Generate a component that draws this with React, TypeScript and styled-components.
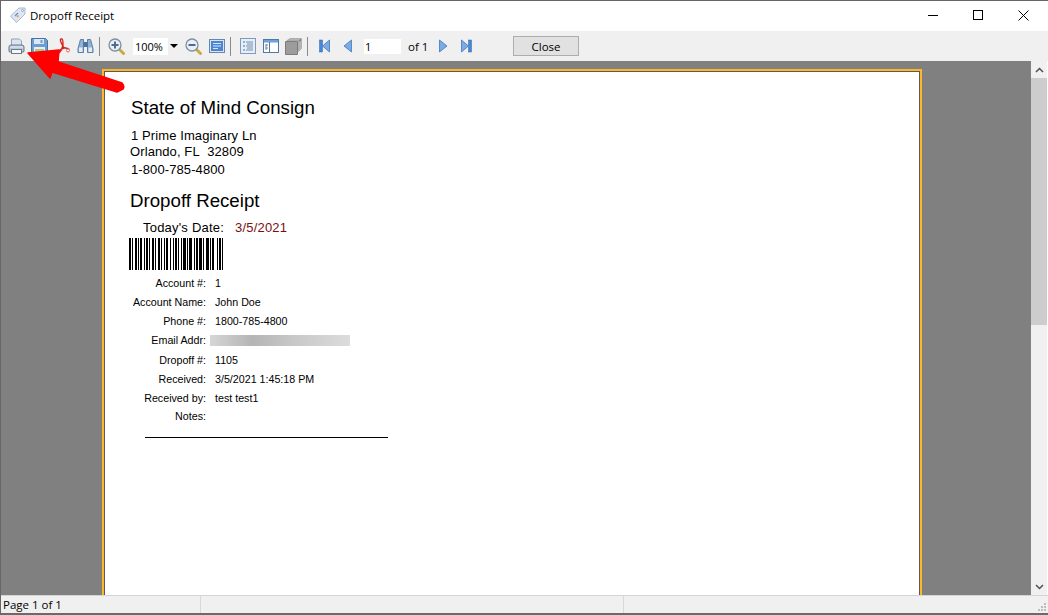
import React from "react"
import styled, { createGlobalStyle } from "styled-components"

const GlobalStyle = createGlobalStyle`
	html, body {
		margin: 0;
		padding: 0;
		height: 100%;
		overflow: hidden;
		background: #fff;
	}
	#root {
		height: 100%;
	}
`

const details = [
	{ label: "Account #:", value: "1" },
	{ label: "Account Name:", value: "John Doe" },
	{ label: "Phone #:", value: "1800-785-4800" },
	{ label: "Email Addr:", blurred: true },
	{ label: "Dropoff #:", value: "1105" },
	{ label: "Received:", value: "3/5/2021 1:45:18 PM" },
	{ label: "Received by:", value: "test test1" },
	{ label: "Notes:", value: "" },
]

// widths of bar, gap, bar, gap... read off the reference
const barWidths = [
	2, 1, 1, 2, 2, 1, 1, 1, 2, 2, 1, 1, 2, 1, 1, 2, 2, 1, 1, 2, 2, 1, 1, 2, 1, 1, 2, 2, 1, 2, 1, 1, 2, 1, 1, 2, 1, 1, 3,
	1, 1, 1, 3, 2, 1, 1, 2, 1, 3, 1, 1, 2, 3, 1, 1, 1, 2, 3, 1, 1, 2, 1, 1,
]

function Barcode() {
	let x = 0
	const bars = barWidths.map((w, i) => {
		const bar = i % 2 === 0 ? <rect key={i} x={x} y={0} width={w} height={32} fill="#000" /> : null
		x += w
		return bar
	})
	return (
		<BarcodeSvg width={94} height={32} viewBox="0 0 94 32">
			{bars}
		</BarcodeSvg>
	)
}

const PrintIcon = () => (
	<svg width={17} height={17} viewBox="0 0 17 17">
		<path d="M3.500 1h8l2 2v5h-10z" fill="#dbe5f0" stroke="#8ea6bf" />
		<path d="M1 9Q1 7 3 7h11q2 0 2 2v4q0 1-1 1H2q-1 0-1-1z" fill="#bcc9d6" stroke="#64778b" />
		<path d="M2 9h13" stroke="#e6edf4" />
		<rect x={3.500} y={11.500} width={10} height={4} fill="#f4f6f8" stroke="#6d7c8c" />
	</svg>
)

const SaveIcon = () => (
	<svg width={17} height={17} viewBox="0 0 17 17">
		<path d="M.5.5h14l2 2v14H.5z" fill="#6f9dd0" stroke="#4572a8" />
		<rect x={3} y={1} width={10} height={5} fill="#dbe7f4" />
		<rect x={9.500} y={2} width={2} height={3} fill="#6f9dd0" />
		<rect x={3} y={9} width={11} height={7} fill="#e4eef6" />
		<rect x={4} y={11} width={9} height={4} fill="#a4cc86" />
	</svg>
)

const PdfIcon = () => (
	<svg width={16} height={17} viewBox="0 0 16 17">
		<path
			d="M6 1c-1 0-.5 2.500.5 4.500L9 10c-2 .5-4 1.500-5.500 3.500-1 1.500 0 2 1 1 1.500-1.500 3-5 3.500-7.500 0-2.500 0-6-1-6zM8 9.500c2 .2 4.500.5 6.500 2"
			fill="none"
			stroke="#d4231f"
			strokeWidth={1.400}
		/>
		<circle cx={13} cy={12.500} r={1.500} fill="#fff" stroke="#d86a66" />
	</svg>
)

const BinocularIcon = () => (
	<svg width={17} height={17} viewBox="0 0 17 17">
		<path d="M3.500 1.500h3v13h-5.500v-4z" fill="#8fb3d6" stroke="#5a7fa6" />
		<path d="M13.500 1.500h-3v13h5.500v-4z" fill="#8fb3d6" stroke="#5a7fa6" />
		<rect x={6.500} y={4} width={4} height={5} fill="#4f7397" />
		<rect x={2} y={9.500} width={3.500} height={4.500} fill="#e2ecf5" />
		<rect x={11.500} y={9.500} width={3.500} height={4.500} fill="#e2ecf5" />
	</svg>
)

const ZoomIcon = ({ plus }: { plus?: boolean }) => (
	<svg width={17} height={17} viewBox="0 0 17 17">
		<path d="M11 11l4.500 4.500" stroke="#c9aa45" strokeWidth={3} strokeLinecap="round" />
		<circle cx={7} cy={7} r={6} fill="#e8eff6" stroke="#7f8f9f" strokeWidth={1.300} />
		<rect x={3.500} y={6} width={7} height={2} fill="#4d6d90" />
		{plus && <rect x={6} y={3.500} width={2} height={7} fill="#4d6d90" />}
	</svg>
)

const PageViewIcon = () => (
	<svg width={16} height={16} viewBox="0 0 16 16">
		<rect x={0.500} y={1.500} width={15} height={13} fill="#d8e4f2" stroke="#6a86a8" />
		<rect x={2} y={3} width={12} height={10} fill="#4a86d4" />
		<path d="M4 5.500h8M4 8h8M4 10.500h5" stroke="#d5e6f8" />
	</svg>
)

const ContentsIcon = () => (
	<svg width={16} height={16} viewBox="0 0 16 16">
		<rect x={0.500} y={0.500} width={15} height={15} fill="#e6eef7" stroke="#7f9cc0" />
		<path d="M3 4h2M3 8h2M3 12h2" stroke="#4f7099" />
		<path d="M6 4h7M7 6h6M6 8h7M7 10h6M6 12h7" stroke="#7590b2" />
	</svg>
)

const TreeIcon = () => (
	<svg width={16} height={16} viewBox="0 0 16 16">
		<rect x={0.500} y={1.500} width={15} height={13} fill="#fff" stroke="#4d7aa8" />
		<rect x={1} y={2} width={14} height={2.500} fill="#6ea2d8" />
		<path d="M6.500 4v10" stroke="#4d7aa8" />
		<path d="M3 6v6M3 7h2M3 10h2" stroke="#6f7f90" />
	</svg>
)

const PageSetupIcon = () => (
	<svg width={17} height={17} viewBox="0 0 17 17">
		<path d="M.5 3.500h12v13H.5z" fill="#9c9c9c" stroke="#7c7c7c" />
		<path d="M2 2.500L5 .5h11.500v10l-3 3V3H2z" fill="#b5b5b5" stroke="#8a8a8a" strokeWidth={0.500} />
		<path d="M13 3l3-2.500v3z" fill="#8a8a8a" />
	</svg>
)

const NavIcon = ({ flip, stop }: { flip?: boolean; stop?: boolean }) => (
	<NavSvg $flip={flip} width={11} height={14} viewBox="0 0 11 14">
		{stop && <rect x={0.500} y={1} width={3} height={12} fill="#4a86d4" stroke="#2f66b0" strokeWidth={0.500} />}
		<path d={stop ? "M10.500 1v12L3.500 7z" : "M9.500 1v12L2 7z"} fill="#7cabe2" stroke="#3f77c0" strokeWidth={0.800} />
	</NavSvg>
)

export default function App() {
	return (
		<Window>
			<GlobalStyle />
			<TitleBar>
				<svg width={18} height={18} viewBox="0 0 18 18">
					<path d="M1.500 10L10 2h6v6l-8.500 8.500z" fill="#dde6f2" stroke="#a9bad1" />
					<circle cx={13.500} cy={4.500} r={1} fill="#fff" stroke="#8fa2bd" />
					<path d="M6 10l3-3" stroke="#6f8fc9" strokeWidth={1.500} />
					<path d="M8 11l1.500-1.500" stroke="#d99a3c" strokeWidth={1.500} />
				</svg>
				<Title>Dropoff Receipt</Title>
				<WindowButton aria-label="Minimize">
					<svg width={10} height={10} viewBox="0 0 10 10">
						<path d="M0 5.500h10" stroke="#000" />
					</svg>
				</WindowButton>
				<WindowButton aria-label="Maximize">
					<svg width={10} height={10} viewBox="0 0 10 10">
						<rect x={0.500} y={0.500} width={9} height={9} fill="none" stroke="#000" />
					</svg>
				</WindowButton>
				<WindowButton aria-label="Close window">
					<svg width={11} height={11} viewBox="0 0 11 11">
						<path d="M.5.5l10 10M10.500.5l-10 10" stroke="#000" />
					</svg>
				</WindowButton>
			</TitleBar>

			<Toolbar>
				<ToolIcon><PrintIcon /></ToolIcon>
				<ToolIcon><SaveIcon /></ToolIcon>
				<ToolIcon><PdfIcon /></ToolIcon>
				<ToolIcon><BinocularIcon /></ToolIcon>
				<Separator />
				<ToolIcon><ZoomIcon plus /></ToolIcon>
				<ZoomCombo>
					<span>100%</span>
					<ComboArrow />
				</ZoomCombo>
				<ToolIcon><ZoomIcon /></ToolIcon>
				<ToolIcon><PageViewIcon /></ToolIcon>
				<Separator />
				<ToolIcon><ContentsIcon /></ToolIcon>
				<ToolIcon><TreeIcon /></ToolIcon>
				<ToolIcon><PageSetupIcon /></ToolIcon>
				<Separator />
				<ToolIcon><NavIcon stop /></ToolIcon>
				<ToolIcon><NavIcon /></ToolIcon>
				<PageInput>1</PageInput>
				<PageCount>of 1</PageCount>
				<ToolIcon><NavIcon flip /></ToolIcon>
				<ToolIcon><NavIcon flip stop /></ToolIcon>
				<CloseButton>Close</CloseButton>
			</Toolbar>

			<Viewer>
				<PageArea>
					<Page>
						<Heading>State of Mind Consign</Heading>
						<Address>1 Prime Imaginary Ln</Address>
						<Address $tight>Orlando, FL&nbsp; 32809</Address>
						<Address $phone>1-800-785-4800</Address>
						<SubHeading>Dropoff Receipt</SubHeading>
						<DateLine>
							Today's Date:<DateValue>3/5/2021</DateValue>
						</DateLine>
						<Barcode />
						<DetailList>
							{details.map((d) => (
								<React.Fragment key={d.label}>
									<DetailLabel>{d.label}</DetailLabel>
									{d.blurred ? <BlurredValue /> : <DetailValue>{d.value}</DetailValue>}
								</React.Fragment>
							))}
						</DetailList>
						<SignatureLine />
					</Page>
				</PageArea>
				<ScrollBar>
					<ScrollArrow>
						<svg width={9} height={6} viewBox="0 0 9 6">
							<path d="M1 5l3.500-3.500L8 5" fill="none" stroke="#505050" strokeWidth={1.500} />
						</svg>
					</ScrollArrow>
					<ScrollThumb />
					<ScrollTrack />
					<ScrollArrow>
						<svg width={9} height={6} viewBox="0 0 9 6">
							<path d="M1 1l3.500 3.500L8 1" fill="none" stroke="#505050" strokeWidth={1.500} />
						</svg>
					</ScrollArrow>
				</ScrollBar>
			</Viewer>

			<StatusBar>
				<StatusPanel $width={200}>Page 1 of 1</StatusPanel>
				<StatusPanel $width={423} />
				<StatusPanel $grow />
				<Grip width={10} height={10} viewBox="0 0 10 10">
					<path d="M7 1h2v2H7zM4 4h2v2H4zM7 4h2v2H7zM1 7h2v2H1zM4 7h2v2H4zM7 7h2v2H7z" fill="#bdbdbd" />
				</Grip>
			</StatusBar>

			<CalloutArrow width={130} height={50} viewBox="0 0 130 50">
				<path
					d="M27 4L58 1 57 13 121 34Q124 38 122 40L116 43 51 23 49 29z"
					fill="#f00"
					stroke="#f00"
					strokeWidth={1.500}
					strokeLinejoin="round"
				/>
			</CalloutArrow>
		</Window>
	)
}

const Window = styled.div`
	position: relative;
	display: flex;
	flex-direction: column;
	height: 615px;
	width: 1048px;
	box-sizing: border-box;
	border-top: 1px solid #666;
	border-left: 1px solid #666;
	border-bottom: 2px solid #6a6a6a;
	overflow: hidden;
	font-family: "Open Sans", "Liberation Sans", sans-serif;
`

const TitleBar = styled.div`
	display: flex;
	align-items: center;
	height: 30px;
	flex: none;
	box-sizing: border-box;
	padding: 0 1.5px 2px 8px;
	background: #fff;
`

const Title = styled.div`
	flex: 1;
	margin-left: 3px;
	font-size: 11.5px;
	color: #000;
`

const WindowButton = styled.div`
	display: flex;
	align-items: center;
	justify-content: center;
	width: 45.5px;
	height: 28px;
`

const Toolbar = styled.div`
	display: flex;
	align-items: center;
	height: 30px;
	flex: none;
	padding-left: 4px;
	background: #f0f0f0;
`

const ToolIcon = styled.div`
	display: flex;
	align-items: center;
	justify-content: center;
	width: 23px;
	height: 24px;
`

const Separator = styled.div`
	width: 1px;
	height: 19px;
	margin: 0 5px 0 2px;
	background: #8a8a8a;
`

const ZoomCombo = styled.div`
	display: flex;
	align-items: center;
	justify-content: space-between;
	width: 47px;
	height: 17px;
	margin: 0 2px 0 5px;
	padding-left: 2px;
	box-sizing: border-box;
	background: #fff;
	font-size: 11px;
	color: #000;
`

const ComboArrow = styled.div`
	display: flex;
	align-items: center;
	justify-content: center;
	width: 12px;
	height: 100%;
	background: #f0f0f0;

	&::after {
		content: "";
		border-left: 4px solid transparent;
		border-right: 4px solid transparent;
		border-top: 4px solid #000;
	}
`

const NavSvg = styled.svg<{ $flip?: boolean }>`
	transform: ${(p) => (p.$flip ? "scaleX(-1)" : "none")};
`

const PageInput = styled.div`
	width: 37px;
	height: 15px;
	margin-left: 5px;
	padding-left: 1px;
	box-sizing: border-box;
	background: #fff;
	font-size: 11px;
	line-height: 15px;
	color: #000;
`

const PageCount = styled.div`
	width: 24px;
	margin-left: 7px;
	font-size: 11.5px;
	color: #000;
`

const CloseButton = styled.div`
	display: flex;
	align-items: center;
	justify-content: center;
	width: 66px;
	height: 20px;
	margin-left: 35px;
	box-sizing: border-box;
	border: 1px solid #adadad;
	background: #e1e1e1;
	font-size: 11.5px;
	color: #000;
`

const Viewer = styled.div`
	display: flex;
	flex: 1;
	min-height: 0;
`

const PageArea = styled.div`
	flex: 1;
	min-width: 0;
	padding: 8px 0 0 101px;
	background: #808080;
	overflow: hidden;
`

const Page = styled.div`
	width: 820px;
	height: 700px;
	box-sizing: border-box;
	padding: 26px 0 0 26px;
	border: 2px solid #fbb82b;
	outline: 1px solid #5a5a5a;
	outline-offset: -3px;
	background: #fff;
	font-family: "Liberation Sans", Arial, sans-serif;
	color: #000;
`

const Heading = styled.div`
	font-size: 18.7px;
	line-height: 22px;
	margin-left: 1px;
`

const Address = styled.div<{ $tight?: boolean; $phone?: boolean }>`
	font-size: 13px;
	line-height: 16px;
	letter-spacing: 0.1px;
	margin-top: ${(p) => (p.$phone ? "2px" : p.$tight ? "0" : "9px")};
	margin-left: ${(p) => (p.$tight ? "0" : "1px")};
`

const SubHeading = styled.div`
	font-size: 18.7px;
	line-height: 22px;
	margin-top: 12px;
`

const DateLine = styled.div`
	font-size: 13px;
	line-height: 16px;
	letter-spacing: 0.2px;
	margin: 8px 0 0 13px;
`

const DateValue = styled.span`
	margin-left: 11px;
	color: #7a0f0f;
`

const BarcodeSvg = styled.svg`
	display: block;
	margin-top: 2px;
	margin-left: -1px;
`

const DetailList = styled.div`
	display: grid;
	grid-template-columns: 76px 1fr;
	grid-template-rows: 19px 19px 19px 20px 19px 19px 18px 19px;
	column-gap: 9px;
	align-items: start;
	margin-top: 4px;
	font-size: 10.7px;
	line-height: 19px;
`

const DetailLabel = styled.div`
	display: flex;
	justify-content: flex-end;
	white-space: nowrap;
`

const DetailValue = styled.div`
	white-space: nowrap;
`

const BlurredValue = styled.div`
	width: 140px;
	height: 11px;
	margin: 4px 0 0 -5px;
	background: linear-gradient(90deg, #d6d6d6 0%, #b5b5b5 30%, #c8c8c8 60%, #dcdcdc 100%);
`

const SignatureLine = styled.div`
	width: 243px;
	height: 1px;
	margin: 11px 0 0 15px;
	background: #000;
`

const ScrollBar = styled.div`
	display: flex;
	flex-direction: column;
	flex: none;
	width: 16px;
	border-right: 1px solid #fff;
	background: #f0f0f0;
`

const ScrollArrow = styled.div`
	display: flex;
	align-items: center;
	justify-content: center;
	flex: none;
	height: 17px;
`

const ScrollThumb = styled.div`
	flex: none;
	height: 247px;
	background: #cdcdcd;
`

const ScrollTrack = styled.div`
	flex: 1;
`

const StatusBar = styled.div`
	display: flex;
	align-items: stretch;
	flex: none;
	height: 18px;
	position: relative;
	border-top: 1px solid #d4d4d4;
	box-sizing: border-box;
	background: #f0f0f0;
	font-size: 11.5px;
	color: #000;
`

const StatusPanel = styled.div<{ $width?: number; $grow?: boolean }>`
	flex: ${(p) => (p.$grow ? "1" : "none")};
	width: ${(p) => (p.$width ? `${p.$width}px` : "auto")};
	padding-left: 2px;
	box-sizing: border-box;
	border-right: ${(p) => (p.$grow ? "none" : "1px solid #d8d8d8")};
	line-height: 17px;
`

const Grip = styled.svg`
	position: absolute;
	right: 1px;
	bottom: 1px;
`

const CalloutArrow = styled.svg`
	position: absolute;
	left: 0;
	top: 48px;
	pointer-events: none;
`
